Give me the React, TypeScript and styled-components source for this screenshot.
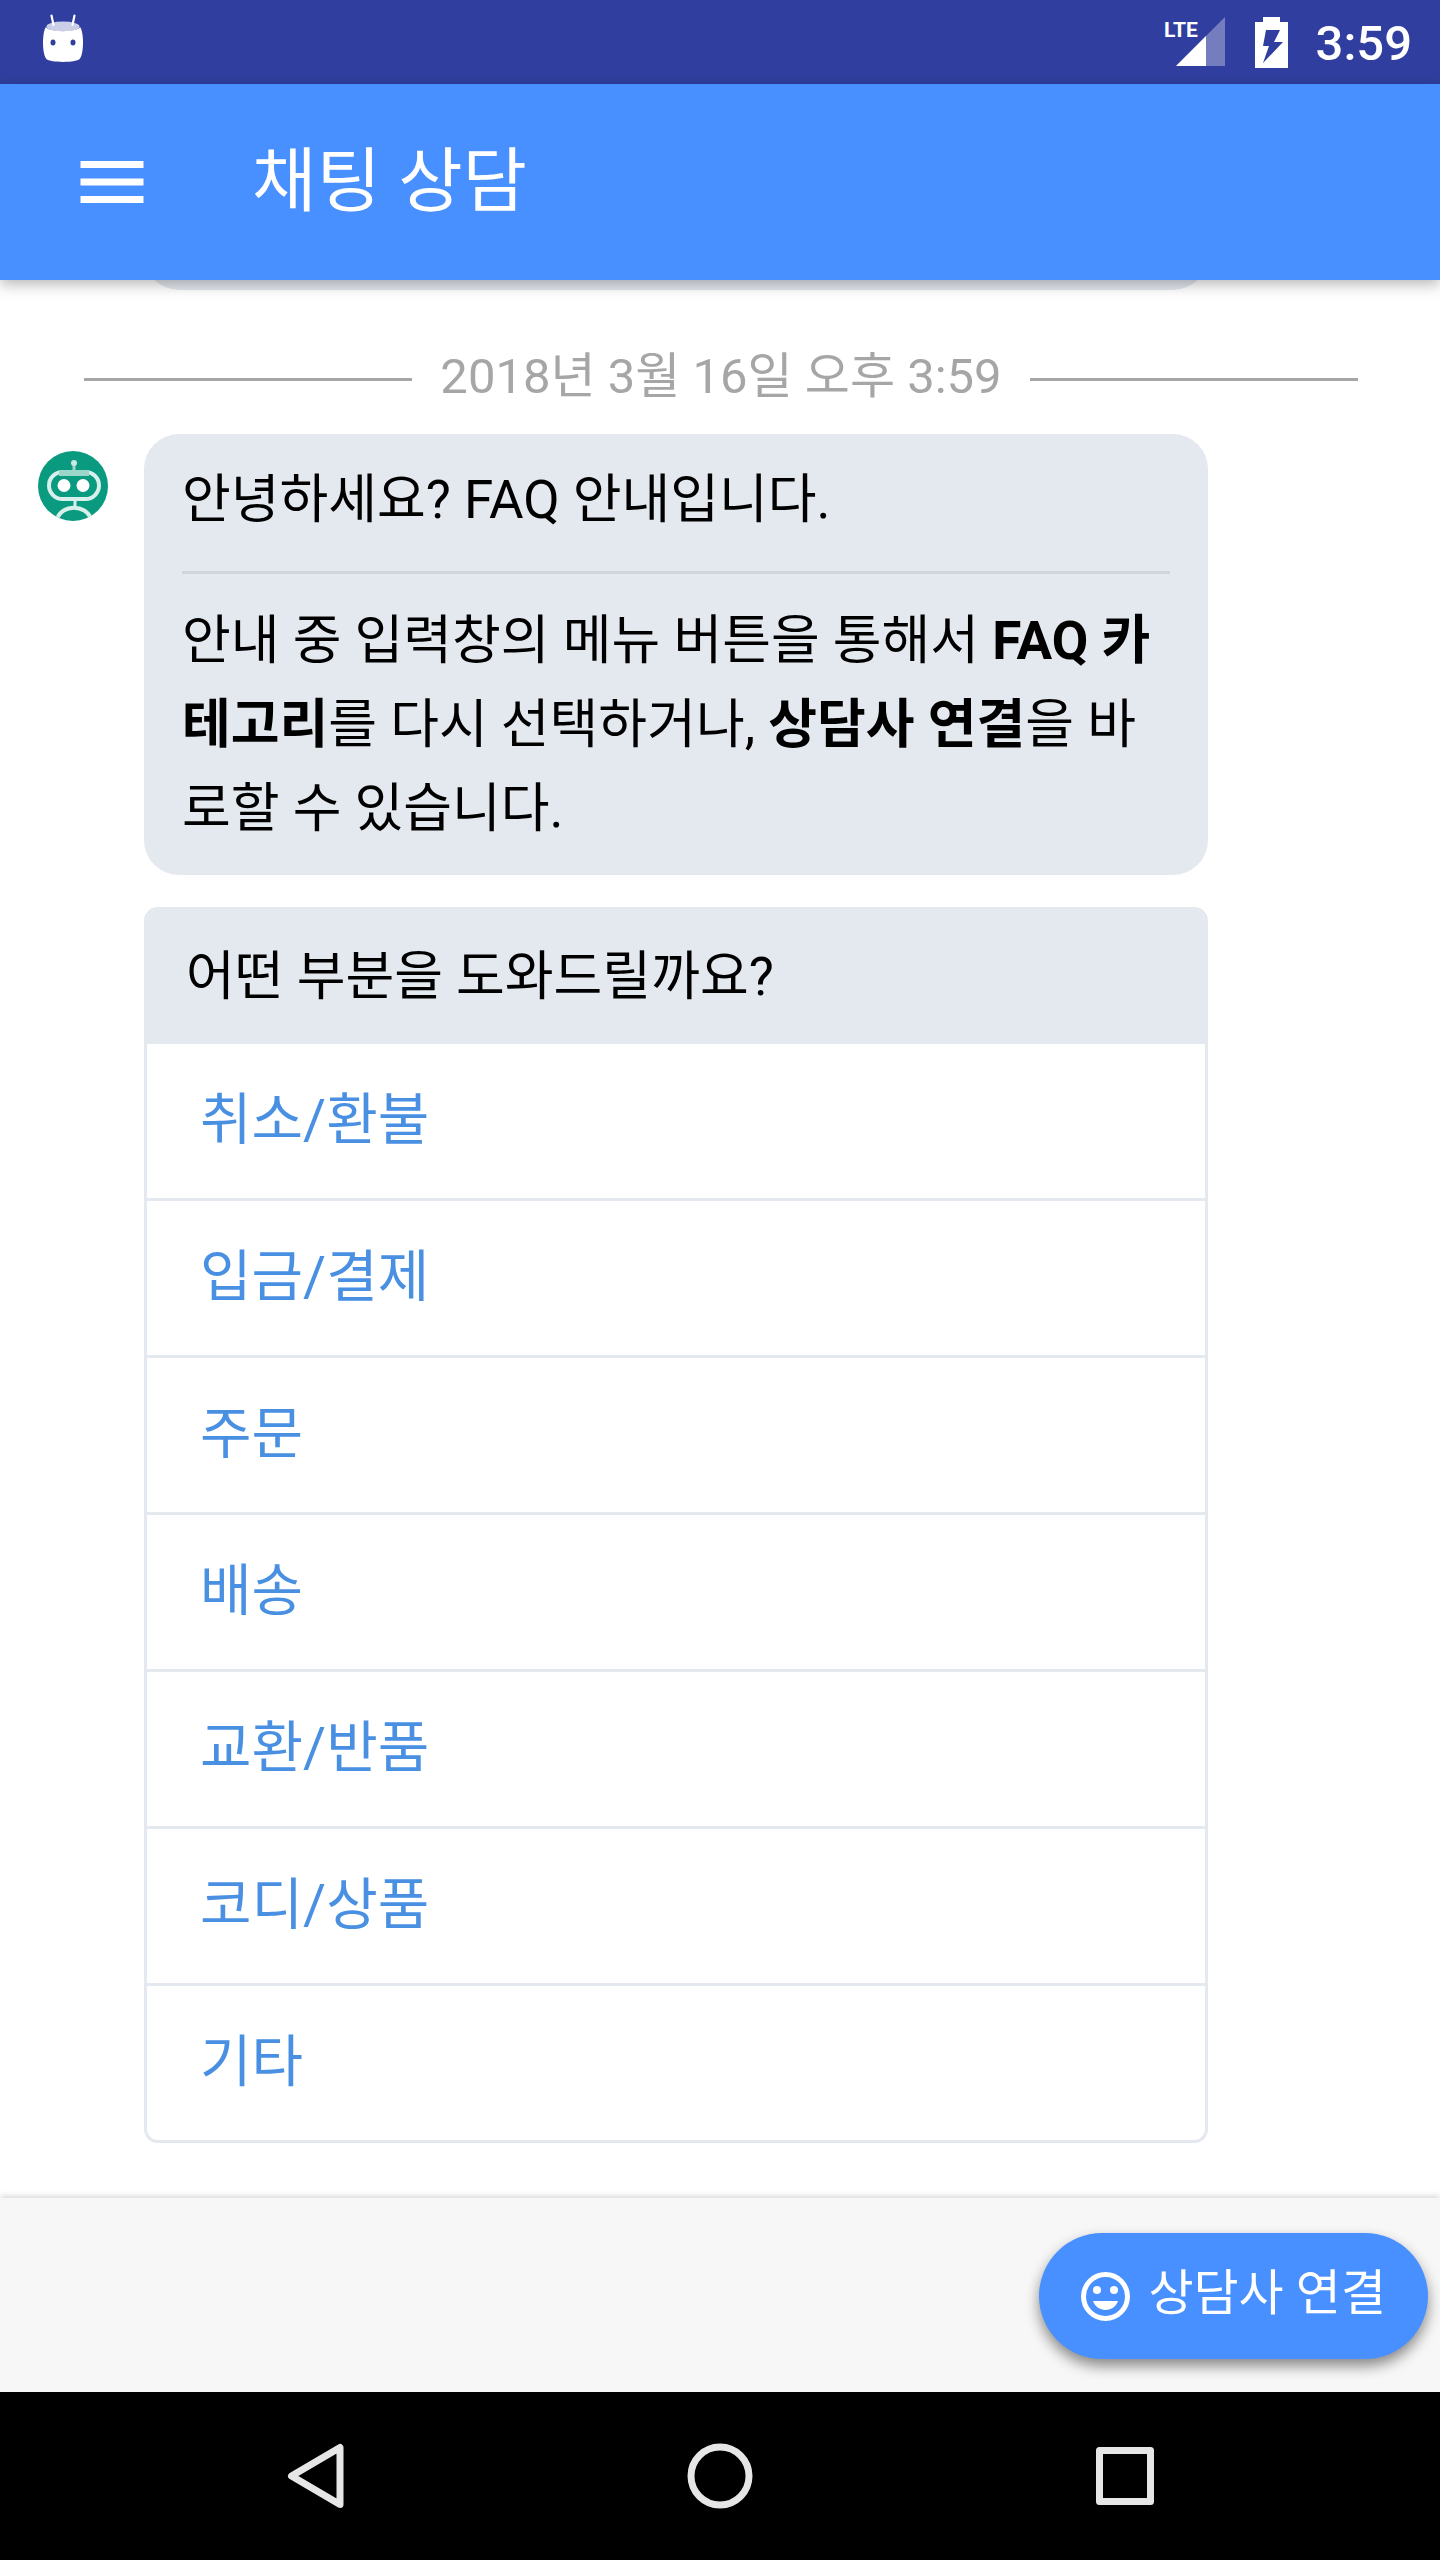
import React from "react";
import styled, { createGlobalStyle } from "styled-components";

const colors = {
  status: "#303f9f",
  primary: "#488fff",
  bubble: "#e4e8ef",
  rule: "#d1d6db",
  link: "#4a90e2",
  muted: "#a6a6a6",
  footer: "#f7f7f7",
  navIcon: "#e6e6e6",
};

const GlobalStyle = createGlobalStyle`
  *, *::before, *::after { box-sizing: border-box; }
  body {
    margin: 0;
    background: #fff;
    font-family: Roboto, "Noto Sans CJK KR", sans-serif;
    color: #000;
  }
  button {
    font: inherit;
    color: inherit;
    border: 0;
    padding: 0;
    background: none;
    cursor: pointer;
  }
  svg { display: block; flex: none; }
`;

const Screen = styled.div`
  display: flex;
  flex-direction: column;
  min-height: 100vh;
`;

const StatusBar = styled.div`
  display: flex;
  align-items: center;
  height: 84px;
  padding: 0 28px 0 42px;
  background: ${colors.status};
  color: #fff;
`;

const StatusIcons = styled.div`
  display: flex;
  align-items: center;
  gap: 28px;
  margin-left: auto;
`;

const Clock = styled.time`
  font-size: 49px;
  font-weight: 500;
  line-height: 56px;
  padding-top: 4px;
`;

const AppBar = styled.header`
  position: relative;
  z-index: 1;
  display: flex;
  align-items: center;
  gap: 98px;
  height: 196px;
  padding: 0 70px;
  background: ${colors.primary};
  color: #fff;
  box-shadow: 0 4px 14px rgba(0, 0, 0, 0.3);
`;

const Title = styled.h1`
  margin: 0;
  font-size: 70px;
  font-weight: 400;
  line-height: 84px;
`;

const Chat = styled.main`
  flex: 1;
  display: flex;
  flex-direction: column;
  padding: 0 232px 53px 38px;
  overflow: hidden;
`;

const EarlierBubble = styled.div`
  height: 80px;
  margin: -70px 0 0 106px;
  border-radius: 35px;
  background: ${colors.bubble};
`;

const DateDivider = styled.div`
  display: flex;
  align-items: center;
  gap: 28px;
  margin: 46px -150px 16px 46px;
  color: ${colors.muted};
  font-size: 49px;
  line-height: 82px;

  &::before,
  &::after {
    content: "";
    flex: 1;
    height: 3px;
    margin-top: 4px;
    background: ${colors.muted};
  }
`;

const Message = styled.div`
  display: flex;
  align-items: flex-start;
  gap: 36px;
`;

const Avatar = styled.div`
  flex: none;
  margin-top: 17px;
`;

const Bubbles = styled.div`
  flex: 1;
  display: flex;
  flex-direction: column;
  gap: 32px;
`;

const Bubble = styled.div`
  padding: 24px 38px;
  border-radius: 35px;
  background: ${colors.bubble};
  font-size: 53px;
  line-height: 84px;

  p {
    margin: 0;
  }
  hr {
    height: 3px;
    margin: 29px 0 25px;
    border: 0;
    background: ${colors.rule};
  }
`;

const MenuCard = styled.section`
  border: 3px solid ${colors.bubble};
  border-radius: 14px;
  overflow: hidden;
`;

const MenuTitle = styled.h2`
  margin: 0;
  padding: 25px 39px;
  background: ${colors.bubble};
  font-size: 53px;
  font-weight: 400;
  line-height: 84px;
`;

const MenuList = styled.ul`
  margin: 0;
  padding: 0;
  list-style: none;

  li + li {
    border-top: 3px solid ${colors.bubble};
  }
`;

const MenuItem = styled.button`
  display: block;
  width: 100%;
  padding: 34px 53px 36px;
  color: ${colors.link};
  font-size: 56px;
  line-height: 84px;
  text-align: left;
`;

const Footer = styled.footer`
  position: relative;
  display: flex;
  align-items: center;
  justify-content: flex-end;
  height: 194px;
  padding: 2px 12px 0;
  background: ${colors.footer};
  box-shadow: 0 -1px 7px rgba(0, 0, 0, 0.2);
`;

const AgentButton = styled.button`
  && {
    display: flex;
    align-items: center;
    gap: 18px;
    height: 126px;
    padding: 0 42px;
    border-radius: 63px;
    background: ${colors.primary};
    color: #fff;
    font-size: 49px;
    line-height: 70px;
    box-shadow: 0 7px 14px rgba(0, 0, 0, 0.45);
  }
`;

const ButtonLabel = styled.span`
  padding-bottom: 4px;
`;

const NavBar = styled.nav`
  position: relative;
  display: grid;
  grid-template-columns: repeat(3, 1fr);
  height: 168px;
  padding: 0 112px;
  background: #000;
`;

const NavButton = styled.button`
  display: grid;
  place-items: center;
`;

const topics = ["취소/환불", "입금/결제", "주문", "배송", "교환/반품", "코디/상품", "기타"];

const DroidIcon = () => (
  <svg width="42" height="56" viewBox="0 0 42 56" fill="#fff" aria-hidden="true">
    <ellipse cx="21" cy="12.500" rx="16.500" ry="5" opacity="0.75" />
    <path d="M9.500 1.500L11.500 11M32.500 1.500L30.500 11" stroke="#fff" strokeWidth="2.200" strokeLinecap="round" />
    <path
      fillRule="evenodd"
      d="M4 13C6 18.500 36 18.500 38 13C42 18 42 39 38 44.500C36 49 6 49 4 44.500C0 39 0 18 4 13ZM8.500 28.500a2.500 3 0 1 0 5 0a2.500 3 0 1 0-5 0M28.500 28.500a2.500 3 0 1 0 5 0a2.500 3 0 1 0-5 0"
    />
  </svg>
);

const SignalIcon = () => (
  <svg width="63" height="50" viewBox="0 0 63 50" fill="#fff" role="img" aria-label="LTE">
    <path d="M61 0V49H12Z" opacity="0.33" />
    <path d="M42 19V49H12Z" />
    <text x="0" y="20" fontFamily='"Liberation Sans Narrow", Roboto, sans-serif' fontWeight="700" fontSize="21">
      LTE
    </text>
  </svg>
);

const BatteryIcon = () => (
  <svg width="33" height="51" viewBox="0 0 33 51" fill="#fff" aria-hidden="true">
    <path fillRule="evenodd" d="M8 0H25V5H33V51H0V5H8ZM11 13L8 29H14L8 46L28 25H19L25 13Z" />
  </svg>
);

const MenuIcon = () => (
  <svg width="84" height="84" viewBox="0 0 24 24" fill="currentColor" aria-hidden="true">
    <path d="M3 18h18v-2H3v2zm0-5h18v-2H3v2zm0-7v2h18V6H3z" />
  </svg>
);

const RobotIcon = () => (
  <svg width="70" height="70" viewBox="0 0 70 70" fill="none" role="img" aria-label="챗봇">
    <defs>
      <clipPath id="robot-disc">
        <circle cx="35" cy="35" r="35" />
      </clipPath>
    </defs>
    <g clipPath="url(#robot-disc)">
      <rect width="70" height="70" fill="#0a9a80" />
      <path d="M36 12V20" stroke="#9ad6ca" strokeWidth="3" />
      <circle cx="36" cy="12" r="3" fill="#c8e9e3" />
      <rect x="11" y="21" width="50" height="27" rx="13.500" stroke="#d8f0eb" strokeWidth="4" />
      <path d="M21 22H51" stroke="#9ad6ca" strokeWidth="6" />
      <circle cx="26" cy="34.500" r="6.500" fill="#fff" />
      <circle cx="45" cy="34.500" r="6.500" fill="#fff" />
      <path d="M37 49V56" stroke="#d8f0eb" strokeWidth="3" />
      <path d="M19 68C24 53 48 53 53 68" stroke="#d8f0eb" strokeWidth="4" />
      <path d="M4 60L22 72M66 60L50 72" stroke="#fff" strokeWidth="6" />
    </g>
  </svg>
);

const SmileIcon = () => (
  <svg width="49" height="49" viewBox="0 0 49 49" fill="currentColor" aria-hidden="true">
    <circle cx="24.500" cy="24.500" r="22" fill="none" stroke="currentColor" strokeWidth="5" />
    <circle cx="16" cy="18" r="4" />
    <circle cx="33" cy="18" r="4" />
    <path d="M12 29H37C35 34.500 30.500 38 24.500 38S14 34.500 12 29Z" />
  </svg>
);

const BackIcon = () => (
  <svg width="70" height="70" viewBox="0 0 70 70" fill="none" stroke={colors.navIcon} strokeWidth="7" strokeLinejoin="round" aria-hidden="true">
    <path d="M60 6.500V63.500L11.500 35Z" />
  </svg>
);

const HomeIcon = () => (
  <svg width="70" height="70" viewBox="0 0 70 70" fill="none" stroke={colors.navIcon} strokeWidth="7" aria-hidden="true">
    <circle cx="35" cy="35" r="29" />
  </svg>
);

const RecentIcon = () => (
  <svg width="70" height="70" viewBox="0 0 70 70" fill="none" stroke={colors.navIcon} strokeWidth="7" strokeLinejoin="round" aria-hidden="true">
    <rect x="9.500" y="9.500" width="51" height="51" />
  </svg>
);

export default function App() {
  return (
    <Screen lang="ko">
      <GlobalStyle />
      <StatusBar>
        <DroidIcon />
        <StatusIcons>
          <SignalIcon />
          <BatteryIcon />
          <Clock>3:59</Clock>
        </StatusIcons>
      </StatusBar>
      <AppBar>
        <button type="button" aria-label="메뉴">
          <MenuIcon />
        </button>
        <Title>채팅 상담</Title>
      </AppBar>
      <Chat>
        <EarlierBubble />
        <DateDivider>2018년 3월 16일 오후 3:59</DateDivider>
        <Message>
          <Avatar>
            <RobotIcon />
          </Avatar>
          <Bubbles>
            <Bubble>
              <p>안녕하세요? FAQ 안내입니다.</p>
              <hr />
              <p>
                안내 중 입력창의 메뉴 버튼을 통해서 <b>FAQ 카테고리</b>를 다시 선택하거나, <b>상담사 연결</b>을 바로할 수
                있습니다.
              </p>
            </Bubble>
            <MenuCard>
              <MenuTitle>어떤 부분을 도와드릴까요?</MenuTitle>
              <MenuList>
                {topics.map((topic) => (
                  <li key={topic}>
                    <MenuItem type="button">{topic}</MenuItem>
                  </li>
                ))}
              </MenuList>
            </MenuCard>
          </Bubbles>
        </Message>
      </Chat>
      <Footer>
        <AgentButton type="button">
          <SmileIcon />
          <ButtonLabel>상담사 연결</ButtonLabel>
        </AgentButton>
      </Footer>
      <NavBar>
        <NavButton type="button" aria-label="뒤로">
          <BackIcon />
        </NavButton>
        <NavButton type="button" aria-label="홈">
          <HomeIcon />
        </NavButton>
        <NavButton type="button" aria-label="최근 앱">
          <RecentIcon />
        </NavButton>
      </NavBar>
    </Screen>
  );
}
